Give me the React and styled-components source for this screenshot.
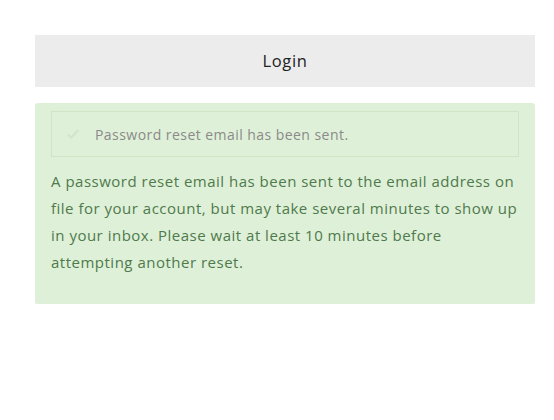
import React from "react";
import styled, { createGlobalStyle } from "styled-components";

const GlobalStyle = createGlobalStyle`
  body {
    margin: 0;
    background: #fff;
    font-family: "Open Sans", "DejaVu Sans", sans-serif;
  }
`;

const Page = styled.div`
  width: 500px;
  padding: 35px 19px 0 35px;
  display: flex;
  flex-direction: column;
  gap: 16px;
`;

const LoginBar = styled.div`
  height: 52px;
  background: #ececec;
  display: flex;
  align-items: center;
  justify-content: center;
  padding-bottom: 2px;
  box-sizing: border-box;
  font-size: 16.5px;
  letter-spacing: 0.6px;
  color: #222;
`;

const Alert = styled.div`
  background: #dff0d8;
  border-radius: 3px;
  padding: 8px 16px 28px;
  box-shadow: 0 1px 1px rgba(0, 0, 0, 0.06);
`;

const Notice = styled.div`
  display: flex;
  align-items: center;
  gap: 15px;
  height: 44px;
  padding: 0 14px;
  border: 1px solid #d0e4c6;
  font-size: 14px;
  letter-spacing: 0.45px;
  color: #8a8a8a;
`;

const Check = styled.svg`
  width: 14px;
  height: 14px;
  flex: none;
`;

const Body = styled.p`
  margin: 11px 0 0;
  font-size: 15px;
  letter-spacing: 0.5px;
  line-height: 27px;
  color: #4e7a4c;
`;

export default function App() {
  return (
    <>
      <GlobalStyle />
      <Page>
        <LoginBar>Login</LoginBar>
        <Alert>
          <Notice>
            <Check viewBox="0 0 16 16">
              <path d="M2 8.5 L6 12 L14 3.5" fill="none" stroke="#d2e4ca" strokeWidth="2.4" />
            </Check>
            Password reset email has been sent.
          </Notice>
          <Body>
            A password reset email has been sent to the email address on file
            for your account, but may take several minutes to show up in your
            inbox. Please wait at least 10 minutes before attempting another
            reset.
          </Body>
        </Alert>
      </Page>
    </>
  );
}
